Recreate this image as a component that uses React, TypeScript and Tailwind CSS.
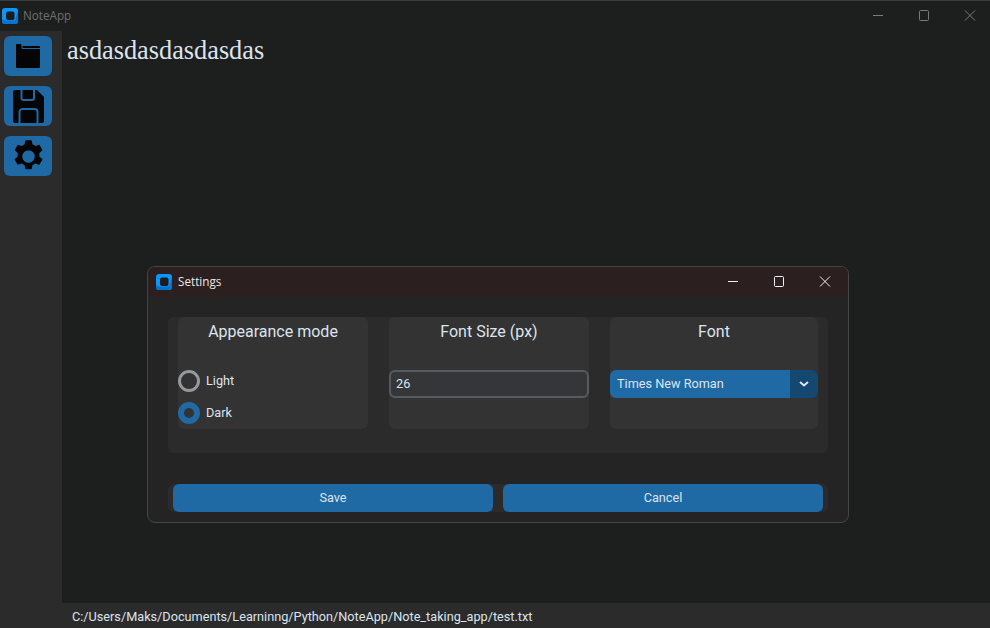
const roboto = "font-['Roboto',sans-serif]";

function AppLogo() {
  return (
    <svg width="16" height="16" viewBox="0 0 16 16" className="shrink-0">
      <rect x="0" y="0" width="16" height="16" rx="3" fill="#0a95ff" />
      <path d="M0 11 V13 A3 3 0 0 0 3 16 H13 A3 3 0 0 0 16 13 V3 L13 12.5 H3 Z" fill="#0673cf" />
      <rect x="4" y="3.5" width="8.5" height="8.5" rx="2" fill="#1a1c1e" />
    </svg>
  );
}

function WindowButtons({ color, gap, size }: { color: string; gap: string; size: number }) {
  return (
    <div className={`flex items-center ${gap}`}>
      <svg width={size} height={size} viewBox="0 0 12 12">
        <path d="M1 5.5H11" stroke={color} strokeWidth="1" />
      </svg>
      <svg width={size} height={size} viewBox="0 0 12 12">
        <rect x="1.5" y="0.5" width="9" height="10" rx="1" fill="none" stroke={color} strokeWidth="1" />
      </svg>
      <svg width={size} height={size} viewBox="0 0 12 12">
        <path d="M1 0.5L11 10.500M11 0.5L1 10.500" stroke={color} strokeWidth="1" />
      </svg>
    </div>
  );
}

function FolderIcon() {
  return (
    <svg width="24" height="24" viewBox="0 0 24 24">
      <path
        d="M0 1A1 1 0 0 1 1 0H5L6 2H23A1 1 0 0 1 24 3V23A1 1 0 0 1 23 24H1A1 1 0 0 1 0 23Z"
        fill="#050505"
      />
      <path d="M6 0.500L6 4.500H24" stroke="#1f6aa5" strokeWidth="1" fill="none" />
    </svg>
  );
}

function SaveIcon() {
  return (
    <svg width="31" height="33" viewBox="0 0 31 33">
      <path
        d="M2 0H24L31 7V31A2 2 0 0 1 29 33H2A2 2 0 0 1 0 31V2A2 2 0 0 1 2 0Z"
        fill="#050505"
      />
      <path d="M8.500 0V8A2 2 0 0 0 10.500 10H19A2 2 0 0 0 21 8V0" stroke="#1f6aa5" strokeWidth="2" fill="none" />
      <path d="M6.500 33V22A3 3 0 0 1 9.500 19H21.500A3 3 0 0 1 24.500 22V33" stroke="#1f6aa5" strokeWidth="2" fill="none" />
    </svg>
  );
}

function GearIcon() {
  return (
    <svg width="35" height="35" viewBox="0 0 24 24">
      <path
        fillRule="evenodd"
        fill="#050505"
        stroke="#050505"
        strokeWidth="0.8"
        strokeLinejoin="round"
        d="M10.200 1.200h3.600l.6 2.800a8.500 8.500 0 0 1 2.200 1.300l2.700-.9 1.800 3.200-2.100 1.900a8.500 8.500 0 0 1 0 2.600l2.100 1.900-1.800 3.200-2.700-.9a8.500 8.500 0 0 1-2.200 1.300l-.6 2.800h-3.600l-.6-2.800a8.500 8.500 0 0 1-2.200-1.300l-2.700.9-1.800-3.200 2.100-1.900a8.500 8.500 0 0 1 0-2.600L3 7.600l1.800-3.200 2.700.9A8.500 8.500 0 0 1 9.600 4ZM12 7.300a4.700 4.700 0 1 0 0 9.400 4.700 4.700 0 0 0 0-9.400Z"
      />
    </svg>
  );
}

function SideButton({ children }: { children: React.ReactNode }) {
  return (
    <button className="w-12 h-10 rounded-md bg-[#1f6aa5] flex items-center justify-center">
      {children}
    </button>
  );
}

function Card({ width, title, children }: { width: string; title: string; children: React.ReactNode }) {
  return (
    <div className={`${width} h-28 rounded-md bg-[#333333] flex flex-col`}>
      <div className={`${roboto} h-[29px] text-center text-base leading-[29px] text-[#dce4ee]`}>{title}</div>
      <div className="mt-6 flex flex-col">{children}</div>
    </div>
  );
}

function Radio({ label, checked }: { label: string; checked?: boolean }) {
  return (
    <div className="flex items-center h-[22px] gap-1.5">
      <span
        className={`w-[22px] h-[22px] rounded-full box-border ${
          checked ? "border-[6px] border-[#1f6aa5]" : "border-[3px] border-[#94999e]"
        }`}
      />
      <span className={`${roboto} text-[12.7px] leading-none text-[#dce4ee]`}>{label}</span>
    </div>
  );
}

export default function App() {
  return (
    <div className="relative w-[990px] h-[628px] overflow-hidden bg-[#1d1e1e] flex flex-col border-t border-[#3a3a3a]">
      <div className="h-[30px] flex items-center justify-between bg-[#1d1e1e] pl-[2px] shrink-0">
        <div className="flex items-center gap-[5px]">
          <AppLogo />
          <span className="font-['Open_Sans',sans-serif] text-[11.7px] text-[#6f6f6f]">NoteApp</span>
        </div>
        <div className="pr-[14px]">
          <WindowButtons color="#7a7a7a" gap="gap-[34px]" size={12} />
        </div>
      </div>
      <div className="flex flex-1 min-h-0">
        <aside className="w-[62px] shrink-0 bg-[#2b2b2b] flex flex-col gap-[10px] pt-[5px] pl-1">
          <SideButton><FolderIcon /></SideButton>
          <SideButton><SaveIcon /></SideButton>
          <SideButton><GearIcon /></SideButton>
        </aside>
        <div className="flex-1 flex flex-col min-w-0">
          <main className="flex-1 pl-[5px] pt-1.5 font-['Liberation_Serif',serif] text-[26.300px] leading-7 text-[#dce4ee]">
            asdasdasdasdasdas
          </main>
          <footer className={`${roboto} h-[25px] bg-[#2b2b2b] pl-[10px] text-[12.7px] leading-[28px] text-[#dce4ee]`}>
            C:/Users/Maks/Documents/Learninng/Python/NoteApp/Note_taking_app/test.txt
          </footer>
        </div>
      </div>

      <div className="absolute left-[147px] top-[265px] w-[702px] h-[257px] rounded-lg border border-[#454545] bg-[#242424] overflow-hidden">
        <div className="h-[30px] bg-[#2c1f1f] flex items-center justify-between pl-2 pr-[17px]">
          <div className="flex items-center gap-1.5">
            <AppLogo />
            <span className="font-['Open_Sans',sans-serif] text-[11.7px] text-[#e8e8e8]">Settings</span>
          </div>
          <WindowButtons color="#f0f0f0" gap="gap-[34px]" size={12} />
        </div>
        <div className="mt-5 ml-5 w-[660px] h-[136px] rounded-md bg-[#2b2b2b] flex items-start pl-2.5 gap-[21px]">
          <Card width="w-[190px]" title="Appearance mode">
            <div className="flex flex-col gap-2.5">
              <Radio label="Light" />
              <Radio label="Dark" checked />
            </div>
          </Card>
          <Card width="w-[200px]" title="Font Size (px)">
            <input
              readOnly
              value="26"
              className={`${roboto} w-full h-7 rounded-md border-2 border-[#565b5e] bg-[#343638] px-[5px] pb-[2px] text-[12.7px] text-[#dce4ee] outline-none`}
            />
          </Card>
          <Card width="w-[208px]" title="Font">
            <div className={`${roboto} h-7 rounded-md overflow-hidden flex text-[12.7px] text-[#dce4ee]`}>
              <div className="flex-1 bg-[#1f6aa5] pl-[7px] leading-7">Times New Roman</div>
              <div className="w-7 bg-[#144870] flex items-center justify-center">
                <svg width="10" height="6" viewBox="0 0 10 6">
                  <path d="M1 1L5 4.500L9 1" stroke="#dce4ee" strokeWidth="2" fill="none" />
                </svg>
              </div>
            </div>
          </Card>
        </div>
        <div className="mt-[31px] ml-5 w-[660px] h-7 rounded-md bg-[#2b2b2b] flex justify-center gap-2.5">
          <button className={`${roboto} w-80 h-7 rounded-md bg-[#1f6aa5] text-[12.7px] text-[#dce4ee]`}>Save</button>
          <button className={`${roboto} w-80 h-7 rounded-md bg-[#1f6aa5] text-[12.7px] text-[#dce4ee]`}>Cancel</button>
        </div>
      </div>
    </div>
  );
}
